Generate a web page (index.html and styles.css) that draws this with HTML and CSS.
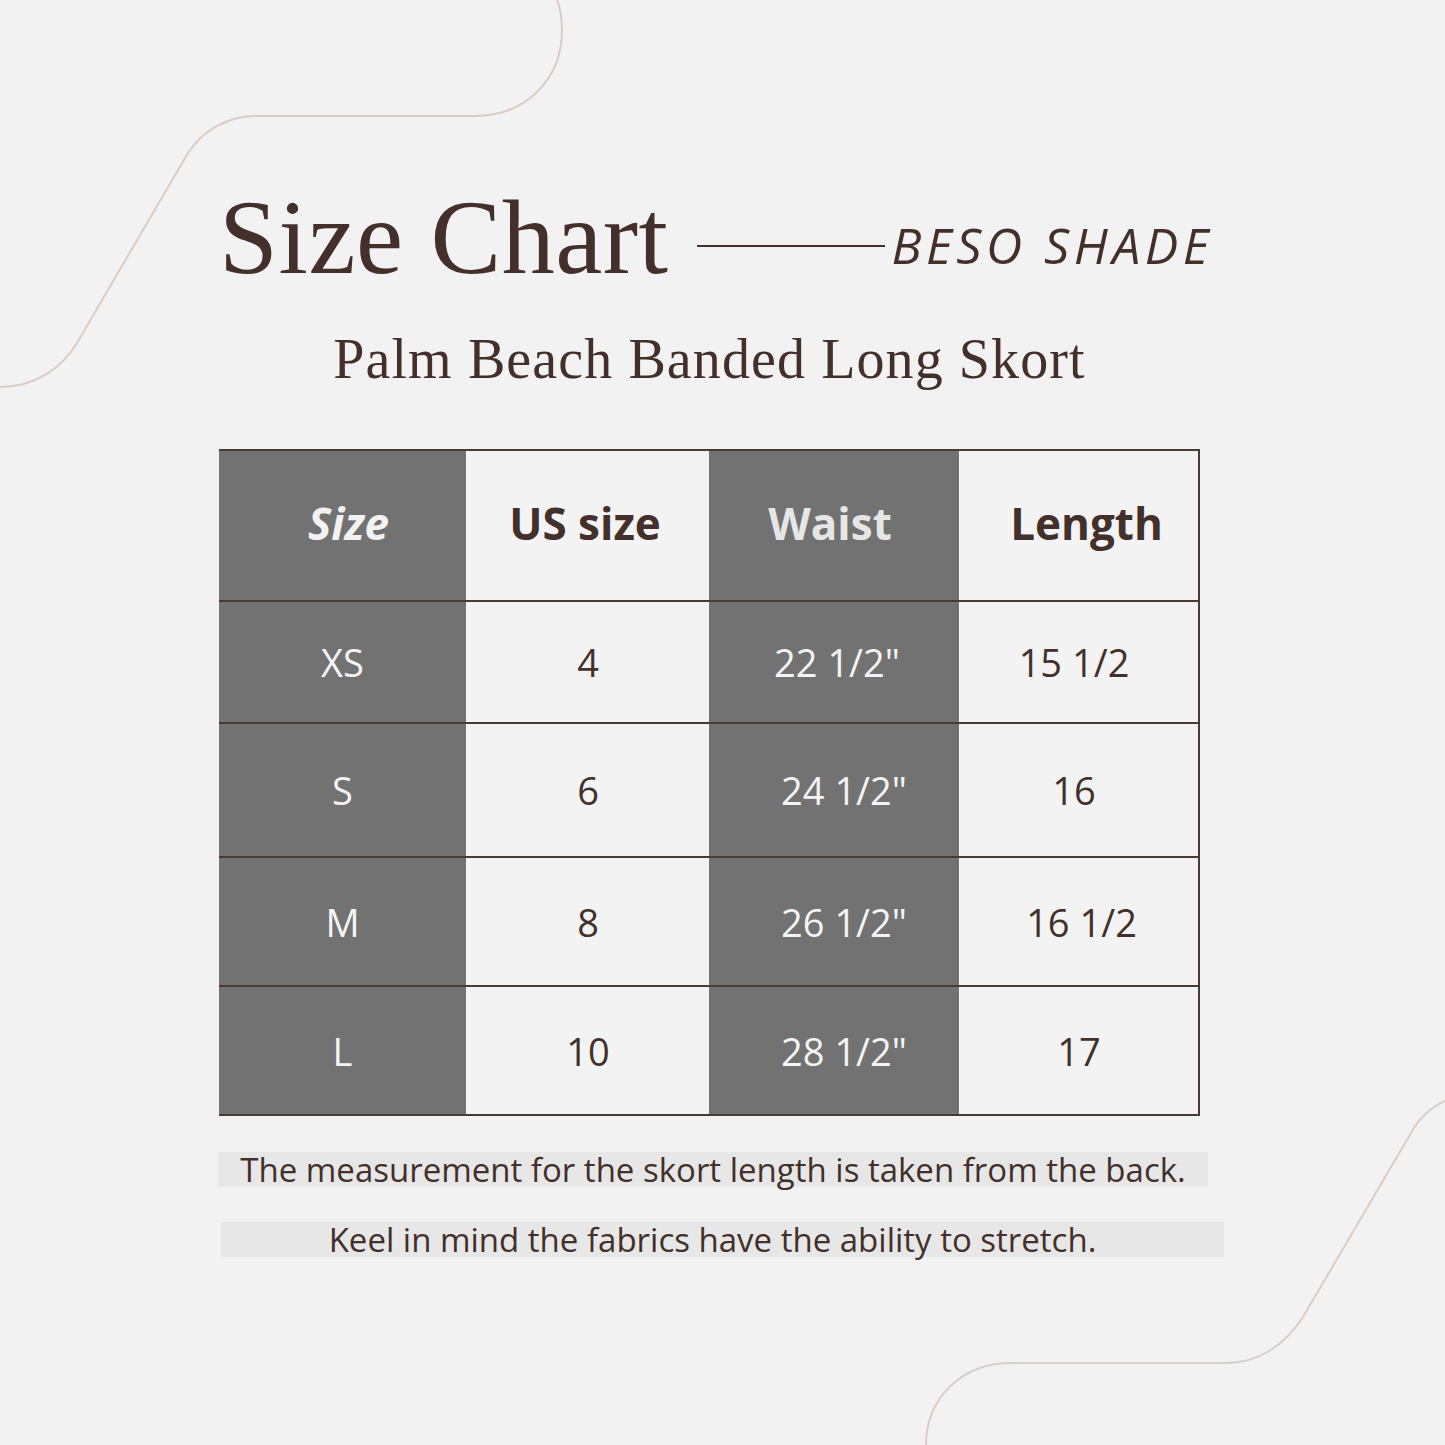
FILE: index.html
```html
<!DOCTYPE html>
<html lang="en">
<head>
<meta charset="utf-8">
<title>Size Chart — Beso Shade</title>
<link rel="stylesheet" href="styles.css">
</head>
<body>
<div class="page">
  <svg class="deco" viewBox="0 0 1445 1445" width="1445" height="1445" aria-hidden="true">
    <path d="M0,387 C35,387 62,368 77,343 L188,153 C203,130 228,116 256,116 L475,116 C525,116 562,80 562,30 C562,18 560,8 557,0" />
    <path d="M1445,1101 C1430,1108 1418,1120 1411,1133 L1303,1317 C1285,1345 1258,1363 1227,1363 L1011,1363 C960,1363 926,1400 926,1445" />
  </svg>

  <main class="content">
    <header class="title-row">
      <h1 class="title">Size Chart</h1>
      <div class="brand">
        <span class="brand-line"></span>
        <span class="brand-name">BESO SHADE</span>
      </div>
    </header>

    <h2 class="subtitle">Palm Beach Banded Long Skort</h2>

    <div class="table">
      <div class="row head">
        <div class="cell dark"><span class="h-size">Size</span></div>
        <div class="cell light"><span class="h-us">US size</span></div>
        <div class="cell dark"><span class="h-waist">Waist</span></div>
        <div class="cell light"><span class="h-len">Length</span></div>
      </div>
      <div class="row r1">
        <div class="cell dark">XS</div>
        <div class="cell light">4</div>
        <div class="cell dark nudge-s">22 1/2"</div>
        <div class="cell light nudge-l0">15 1/2</div>
      </div>
      <div class="row r2">
        <div class="cell dark">S</div>
        <div class="cell light">6</div>
        <div class="cell dark nudge">24 1/2"</div>
        <div class="cell light nudge-l0">16</div>
      </div>
      <div class="row r3">
        <div class="cell dark">M</div>
        <div class="cell light">8</div>
        <div class="cell dark nudge">26 1/2"</div>
        <div class="cell light nudge-l">16 1/2</div>
      </div>
      <div class="row r4">
        <div class="cell dark">L</div>
        <div class="cell light">10</div>
        <div class="cell dark nudge">28 1/2"</div>
        <div class="cell light">17</div>
      </div>
    </div>

    <p class="note note-1">The measurement for the skort length is taken from the back.</p>
    <p class="note note-2">Keel in mind the fabrics have the ability to stretch.</p>
  </main>
</div>
</body>
</html>
```

FILE: styles.css
```css
html, body {
  margin: 0;
  padding: 0;
  background: #f2f2f2;
}

.page {
  position: relative;
  isolation: isolate;
  width: 1445px;
  height: 1445px;
  overflow: hidden;
  background: #f2f2f2;
  color: #43302a;
}

.deco {
  position: absolute;
  left: 0;
  top: 0;
  z-index: -1;
}

.deco path {
  fill: none;
  stroke: #d8cec7;
  stroke-width: 2;
}

.content {
  width: 1005px;
  padding-left: 219px;
  padding-top: 185px;
}

.title-row {
  display: flex;
  align-items: flex-start;
  justify-content: space-between;
  width: 990px;
}

.title {
  margin: 0;
  font-family: "Liberation Serif", "DejaVu Serif", serif;
  font-weight: 400;
  font-size: 106px;
  line-height: 106px;
  letter-spacing: 0.5px;
}

.brand {
  display: flex;
  align-items: center;
  margin-top: 35px;
}

.brand-line {
  display: block;
  width: 188px;
  height: 2px;
  background: #43302a;
  margin-top: 2px;
  margin-right: 6px;
}

.brand-name {
  font-family: "Open Sans", "Liberation Sans", sans-serif;
  font-style: italic;
  font-weight: 400;
  font-size: 50px;
  line-height: 50px;
  letter-spacing: 4.5px;
  margin-right: -4px;
}

.subtitle {
  margin: 40px 0 0;
  width: 981px;
  text-align: center;
  font-family: "Liberation Serif", "DejaVu Serif", serif;
  font-weight: 400;
  font-size: 56px;
  line-height: 56px;
  letter-spacing: 1.1px;
}

.table {
  margin-top: 62px;
  width: 981px;
  border-bottom: 2px solid #4a3a31;
  border-right: 2px solid #4a3a31;
  box-sizing: border-box;
  font-family: "Open Sans", "Liberation Sans", sans-serif;
}

.row {
  display: grid;
  grid-template-columns: 247px 243px 250px 239px;
  border-top: 2px solid #4a3a31;
}

.row.head { height: 149px; }
.row.r1 { height: 120px; }
.row.r2 { height: 132px; }
.row.r3 { height: 127px; }
.row.r4 { height: 127px; }

.cell {
  display: flex;
  align-items: center;
  justify-content: center;
  font-size: 38px;
  font-weight: 400;
}

.cell.dark {
  background: #727272;
  color: #f4f4f4;
}

.cell.light {
  background: #f3f3f3;
  color: #43302a;
  border-left: 1px solid #fafafa;
}

.head .cell {
  font-size: 44px;
  font-weight: 700;
  padding-bottom: 6px;
}

.h-size {
  font-style: italic;
  color: #f2f2f2;
  padding-left: 12px;
}

.h-us { color: #43302a; padding-right: 6px; }
.h-waist { color: #e6e6e6; padding-right: 8px; }
.h-len { color: #43302a; padding-left: 15px; }

.nudge-s { padding-left: 6px; }
.nudge { padding-left: 20px; }
.nudge-l0 { padding-right: 10px; }
.nudge-l { padding-left: 5px; }

.note {
  margin: 0;
  height: 35px;
  background: #e7e7e7;
  font-family: "Open Sans", "Liberation Sans", sans-serif;
  font-size: 33px;
  line-height: 35px;
  text-align: center;
  color: #43302a;
  white-space: nowrap;
}

.note-1 {
  margin-top: 36px;
  margin-left: -1px;
  width: 990px;
}

.note-2 {
  margin-top: 35px;
  margin-left: 2px;
  width: 1003px;
  box-sizing: border-box;
  padding-right: 20px;
}
```
